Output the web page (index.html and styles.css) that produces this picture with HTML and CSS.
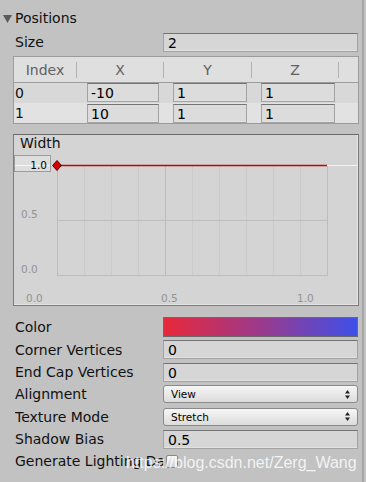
FILE: index.html
```html
<!DOCTYPE html>
<html lang="en">
<head>
    <meta charset="UTF-8">
    <meta name="viewport" content="width=device-width, initial-scale=1.0">
    <title>Line Renderer Inspector</title>
    <link rel="stylesheet" href="styles.css">
</head>
<body>
    <div class="inspector">
        <div class="foldout">
            <svg class="fold-arrow" width="9" height="8" viewBox="0 0 9 8"><polygon points="0,0 9,0 4.5,8" fill="#5b5b5b"/></svg>
            <span>Positions</span>
        </div>

        <div class="prop size-row">
            <span class="label">Size</span>
            <div class="field">2</div>
        </div>

        <div class="table">
            <div class="thead">
                <div class="th th-index">Index</div>
                <div class="th th-x">X</div>
                <div class="th th-y">Y</div>
                <div class="th th-z">Z</div>
            </div>
            <div class="trow row-even">
                <div class="td-index">0</div>
                <div class="field cell cell-x">-10</div>
                <div class="field cell">1</div>
                <div class="field cell">1</div>
            </div>
            <div class="trow row-odd">
                <div class="td-index">1</div>
                <div class="field cell cell-x">10</div>
                <div class="field cell">1</div>
                <div class="field cell">1</div>
            </div>
        </div>

        <div class="curve">
            <div class="curve-title">Width</div>
            <svg class="curve-plot" width="344" height="150" viewBox="0 0 344 150">
                <!-- minor grid -->
                <g stroke="#cacaca" stroke-width="1">
                    <line x1="70.5" y1="10" x2="70.5" y2="120"/>
                    <line x1="97.5" y1="10" x2="97.5" y2="120"/>
                    <line x1="124.5" y1="10" x2="124.5" y2="120"/>
                    <line x1="178.5" y1="10" x2="178.5" y2="120"/>
                    <line x1="205.5" y1="10" x2="205.5" y2="120"/>
                    <line x1="232.5" y1="10" x2="232.5" y2="120"/>
                    <line x1="259.5" y1="10" x2="259.5" y2="120"/>
                    <line x1="286.5" y1="10" x2="286.5" y2="120"/>
                </g>
                <!-- major grid -->
                <g stroke="#bcbcbc" stroke-width="1">
                    <line x1="151.5" y1="10" x2="151.5" y2="120"/>
                    <line x1="43" y1="65.5" x2="313" y2="65.5"/>
                    <rect x="43.5" y="10.5" width="270" height="110" fill="none"/>
                </g>
                <line x1="0" y1="10.5" x2="43" y2="10.5" stroke="#f4f4f4"/>
                <line x1="313" y1="10.5" x2="344" y2="10.5" stroke="#f2f2f2"/>
                <line x1="43" y1="10.5" x2="313" y2="10.5" stroke="#c80000" stroke-width="1.4"/>

                <rect class="axis-box" x="0.5" y="0.5" width="36" height="16" fill="#dedede" stroke="#9c9c9c"/>
                <line x1="1" y1="10.5" x2="36" y2="10.5" stroke="#f6f6f6"/>
                <text class="axis-value" x="33" y="14" text-anchor="end">1.0</text>

                <polygon points="43,5.5 47.5,10.5 43,15.5 38.5,10.5" fill="#d40000" stroke="#5a0000" stroke-width="1"/>

                <text class="axis-label" x="7" y="63">0.5</text>
                <text class="axis-label" x="7" y="118">0.0</text>
                <text class="axis-label" x="12" y="147">0.0</text>
                <text class="axis-label" x="147" y="147">0.5</text>
                <text class="axis-label" x="283" y="147">1.0</text>
            </svg>
        </div>

        <div class="prop color-row">
            <span class="label">Color</span>
            <div class="gradient"></div>
        </div>

        <div class="prop tall">
            <span class="label">Corner Vertices</span>
            <div class="field">0</div>
        </div>

        <div class="prop">
            <span class="label">End Cap Vertices</span>
            <div class="field">0</div>
        </div>

        <div class="prop">
            <span class="label">Alignment</span>
            <div class="dropdown">
                <span>View</span>
                <svg width="5" height="9" viewBox="0 0 5 9"><polygon points="2.5,0 5,3.5 0,3.5" fill="#222"/><polygon points="0,5.5 5,5.5 2.5,9" fill="#222"/></svg>
            </div>
        </div>

        <div class="prop tall">
            <span class="label">Texture Mode</span>
            <div class="dropdown">
                <span>Stretch</span>
                <svg width="5" height="9" viewBox="0 0 5 9"><polygon points="2.5,0 5,3.5 0,3.5" fill="#222"/><polygon points="0,5.5 5,5.5 2.5,9" fill="#222"/></svg>
            </div>
        </div>

        <div class="prop">
            <span class="label">Shadow Bias</span>
            <div class="field">0.5</div>
        </div>

        <div class="prop">
            <span class="label">Generate Lighting Data</span>
            <div class="checkbox"></div>
        </div>
    </div>

    <div class="watermark">https://blog.csdn.net/Zerg_Wang</div>
</body>
</html>
```

FILE: styles.css
```css
body {
    margin: 0;
    background: #c2c2c2;
    font-family: "DejaVu Sans", Verdana, sans-serif;
    font-size: 14px;
    color: #111;
    position: relative;
    height: 482px;
    overflow: hidden;
}

.inspector {
    width: 364px;
    height: 482px;
    border-right: 2px solid #a6a6a6;
    padding-top: 7px;
    box-sizing: border-box;
}

.foldout {
    display: flex;
    align-items: center;
    height: 22px;
    padding-left: 3px;
}

.fold-arrow {
    margin-right: 3px;
    margin-top: 1px;
}

.prop {
    display: flex;
    align-items: center;
    height: 22px;
    padding-left: 15px;
}

.prop.tall {
    height: 23px;
}

.size-row {
    margin-top: 2px;
}

.label {
    width: 148px;
    flex: none;
    white-space: nowrap;
    overflow: hidden;
}

.field {
    width: 195px;
    height: 19px;
    line-height: 18px;
    padding-left: 4px;
    box-sizing: border-box;
    background: #d6d6d6;
    border: 1px solid #a2a2a2;
    border-top-color: #737373;
    box-shadow: inset 0 -1px 0 #e2e2e2;
    color: #000;
}

/* points table */
.table {
    margin: 3px 0 0 13px;
    width: 346px;
    border: 1px solid #9c9c9c;
    box-sizing: border-box;
}

.thead {
    display: flex;
    align-items: center;
    height: 25px;
    background: #dfdfdf;
    border-bottom: 1px solid #9c9c9c;
    color: #616161;
}

.th {
    height: 16px;
    line-height: 16px;
    text-align: center;
    border-right: 1px solid #b2b2b2;
    box-sizing: border-box;
}

.th-index {
    width: 63px;
}

.th-x {
    width: 87px;
}

.th-y {
    width: 88px;
}

.th-z {
    width: 87px;
}

.trow {
    display: flex;
    align-items: flex-start;
    height: 20px;
}

.row-even {
    background: #d8d8d8;
}

.row-odd {
    background: #e2e2e2;
}

.td-index {
    width: 73px;
    line-height: 20px;
    padding-left: 1px;
    box-sizing: border-box;
}

.cell {
    width: 74px;
    margin-right: 14px;
    padding-left: 3px;
    background: #dcdcdc;
}

.cell-x {
    width: 72px;
}

.row-odd .cell {
    margin-top: 1px;
}

/* width curve */
.curve {
    margin: 10px 0 0 13px;
    width: 346px;
    height: 172px;
    box-sizing: border-box;
    background: #d4d4d4;
    border: 1px solid #7c7c7c;
    border-top-color: #6a6a6a;
    box-shadow: inset -1px -1px 0 #e4e4e4;
}

.curve-title {
    height: 20px;
    line-height: 16px;
    padding-left: 6px;
}

.curve-plot {
    display: block;
}

.axis-label {
    font-family: "DejaVu Sans", Verdana, sans-serif;
    font-size: 10.5px;
    fill: #939393;
}

.axis-value {
    font-family: "DejaVu Sans", Verdana, sans-serif;
    font-size: 10.5px;
    fill: #000;
}

/* other properties */
.color-row {
    margin-top: 10px;
}

.gradient {
    width: 195px;
    height: 20px;
    box-sizing: border-box;
    border: 1px solid #6a6a6a;
    background: linear-gradient(to right, #e8283a, #9b3a8c 50%, #3e50ea);
}

.dropdown {
    width: 195px;
    height: 18px;
    box-sizing: border-box;
    display: flex;
    align-items: center;
    justify-content: space-between;
    padding: 0 7px 0 7px;
    border: 1px solid #8a8a8a;
    border-radius: 3px;
    background: linear-gradient(#f6f6f6, #dcdcdc);
    font-size: 10.5px;
    color: #000;
}

.checkbox {
    width: 12px;
    height: 13px;
    margin-left: 3px;
    box-sizing: border-box;
    border: 1px solid #888;
    border-radius: 2px;
    background: linear-gradient(#f2f2f2, #d0d0d0);
}

.watermark {
    position: absolute;
    left: 126px;
    top: 455px;
    font-family: "Liberation Sans", Arial, sans-serif;
    font-size: 16px;
    line-height: 16px;
    color: rgba(255, 255, 255, 0.82);
    white-space: nowrap;
}
```
